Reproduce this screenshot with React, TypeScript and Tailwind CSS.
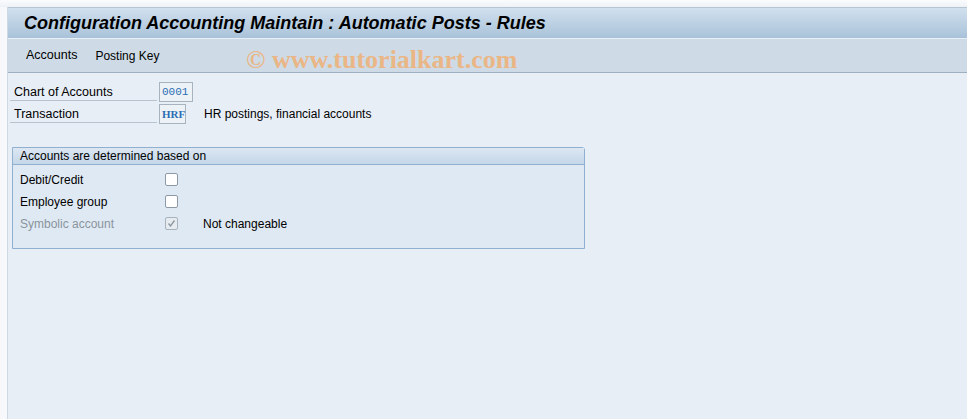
import React from "react";

function Check({ checked, disabled }: { checked?: boolean; disabled?: boolean }) {
  return (
    <div
      className={`w-[13px] h-[13px] rounded-[2px] border flex items-center justify-center ${
        disabled ? "border-[#a8b2bd] bg-[#e6ebf0]" : "border-[#8d99a6] bg-white"
      }`}
    >
      {checked && (
        <svg width="9" height="9" viewBox="0 0 9 9">
          <path d="M1.5 4.5 L3.5 7 L7.5 1.5" fill="none" stroke="#8a959f" strokeWidth="1.3" />
        </svg>
      )}
    </div>
  );
}

export default function App() {
  return (
    <div className="w-[967px] h-[419px] bg-[#f6f8fb] flex flex-col overflow-hidden" style={{ fontFamily: "'Liberation Sans', Arial, sans-serif" }}>
      <div className="h-[7px] bg-gradient-to-b from-[#fafbfd] to-[#eef2f7] shrink-0" />
      <div className="flex flex-1 min-h-0">
        <div className="w-[8px] bg-[#f6f8fb] border-r border-[#cfd9e3] shrink-0" />
        <div className="flex-1 flex flex-col min-w-0 border-t border-[#b7c4d2]">
          <div className="h-[31px] bg-gradient-to-b from-[#d1e0ee] to-[#a9c2d9] flex items-center pl-[16px] border-b border-[#e6eef6]">
            <span className="text-[18px] font-bold italic text-black">
              Configuration Accounting Maintain : Automatic Posts - Rules
            </span>
          </div>
          <div className="h-[34px] bg-[#cedbe6] border-b border-[#9fafc2] flex items-center pl-[18px] relative">
            <span className="text-[12.5px] text-black">Accounts</span>
            <span className="text-[12px] text-black ml-[18px]">Posting Key</span>
            <span
              className="absolute left-[238px] top-[1px] text-[26px] font-bold text-[#eab686]"
              style={{ fontFamily: "'Liberation Serif', 'Times New Roman', serif" }}
            >
              © www.tutorialkart.com
            </span>
          </div>
          <div className="flex-1 bg-[#e8eef6] pt-[9px] pl-[2px]">
            <div className="flex flex-col gap-[3px]">
              <div className="flex items-center h-[19px]">
                <div className="w-[147px] h-[19px] border-b border-[#b9c3cd] pl-[4px] text-[12.5px] leading-[20px] text-black">Chart of Accounts</div>
                <div className="ml-[2px] w-[34px] h-[20px] border border-[#a7b3bf] bg-[#edf2f7] text-[#2a6eb3] text-[11px] leading-[18px] px-[2px]" style={{ fontFamily: "'Liberation Mono', 'Courier New', monospace" }}>0001</div>
              </div>
              <div className="flex items-center h-[19px]">
                <div className="w-[147px] h-[19px] border-b border-[#b9c3cd] pl-[4px] text-[12.5px] leading-[20px] text-black">Transaction</div>
                <div className="ml-[2px] w-[27px] h-[20px] border border-[#a7b3bf] bg-[#edf2f7] text-[#2a6eb3] text-[11px] leading-[18px] px-[2px] font-bold" style={{ fontFamily: "'Liberation Serif', 'Times New Roman', serif" }}>HRF</div>
                <span className="ml-[18px] text-[12px] text-black">HR postings, financial accounts</span>
              </div>
            </div>
            <div className="mt-[24px] ml-[2px] w-[573px] h-[102px] border border-[#8fb0cf] rounded-tr-[3px] bg-[#dfe9f3] flex flex-col">
              <div className="h-[17px] bg-gradient-to-b from-[#dce7f2] to-[#c4d7e9] border-b border-[#8fb0cf] pl-[7px] text-[12px] leading-[16px] text-black">
                Accounts are determined based on
              </div>
              <div className="flex flex-col pt-[8px] pl-[7px] gap-[9px] text-[12px]">
                <div className="flex items-center h-[13px]">
                  <span className="w-[145px] text-black">Debit/Credit</span>
                  <Check />
                </div>
                <div className="flex items-center h-[13px]">
                  <span className="w-[145px] text-black">Employee group</span>
                  <Check />
                </div>
                <div className="flex items-center h-[13px]">
                  <span className="w-[145px] text-[#8a949e]">Symbolic account</span>
                  <Check checked disabled />
                  <span className="ml-[25px] text-black">Not changeable</span>
                </div>
              </div>
            </div>
          </div>
        </div>
      </div>
    </div>
  );
}
